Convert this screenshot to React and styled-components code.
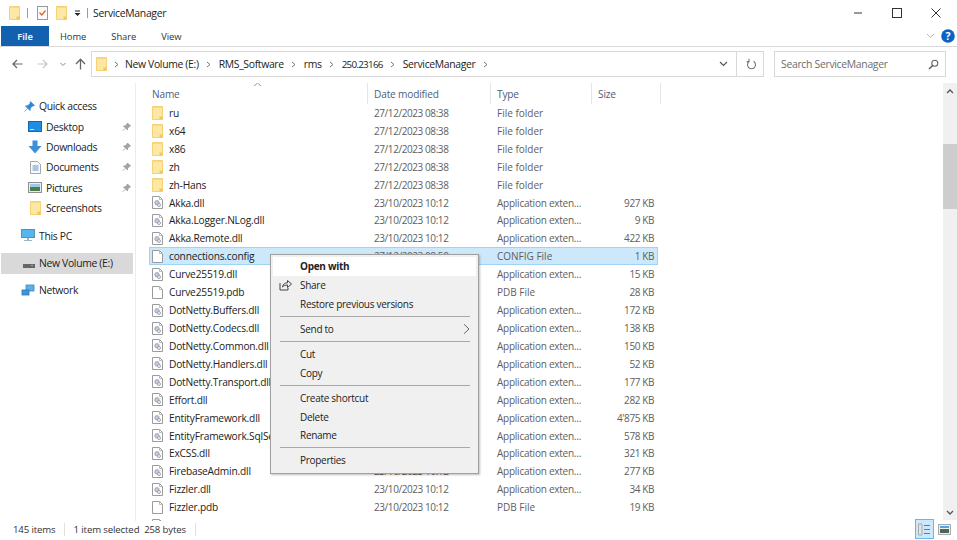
import React from "react";
import styled, { createGlobalStyle } from "styled-components";

const Global = createGlobalStyle`
  html, body { margin: 0; padding: 0; background: #fff; }
  body { font-family: "Open Sans", "Noto Sans", sans-serif; font-size: 10.4px; color: #1f1f1f; }
`;

const Win = styled.div`
  width: 957px; height: 540px; display: flex; flex-direction: column; overflow: hidden; position: relative; background: #fff;
`;
const TitleBar = styled.div`
  height: 26px; display: flex; align-items: center; padding-left: 9px; flex: none;
`;
const QuickSep = styled.span`
  width: 1px; height: 10px; background: #9a9a9a; margin: 0 ${p => p.$m}px;
`;
const QuickGap = styled.span`
  width: ${p => p.$w}px; flex: none;
`;
const TitleText = styled.span`
  font-size: 10.4px; letter-spacing: -0.3px; color: #222;
`;
const WinButtons = styled.div`
  margin-left: auto; display: flex; align-items: center; gap: 29px; padding-right: 16px;
`;
const Tabs = styled.div`
  height: 20px; flex: none; display: flex; align-items: stretch; border-bottom: 1px solid #dadada; box-sizing: content-box;
`;
const FileTab = styled.div`
  width: 48px; margin-left: 1px; background: #1261ae; color: #fff; display: flex; align-items: center; justify-content: center; font-size: 9.4px; font-weight: 600;
`;
const Tab = styled.div`
  display: flex; align-items: center; font-size: 9.4px; letter-spacing: -0.05px; color: #333; margin-left: ${p => p.$ml}px;
`;
const TabRight = styled.div`
  margin-left: auto; display: flex; align-items: center; gap: 6px; padding-right: 2px;
`;
const NavRow = styled.div`
  height: 36px; flex: none; display: flex; align-items: flex-start; padding-top: 4px; box-sizing: border-box;
`;
const NavIcons = styled.div`
  width: 91px; height: 26px; flex: none; display: flex; align-items: center; padding-left: 12px; box-sizing: border-box;
`;
const NavBtn = styled.span`
  display: inline-flex; margin-left: ${p => p.$ml || 0}px;
`;
const AddressBox = styled.div`
  width: 673px; height: 26px; box-sizing: border-box; border: 1px solid #d9d9d9; display: flex; align-items: center; flex: none;
`;
const Crumbs = styled.div`
  display: flex; align-items: center; flex: 1; padding-left: 4px; font-size: 10.4px; letter-spacing: -0.33px; color: #222;
`;
const CrumbDigits = styled.span`
  font-size: 9.8px; letter-spacing: -0.7px;
`;
const CrumbArrow = styled.span`
  display: inline-flex; margin: 0 ${p => p.$r || 8}px 0 7px;
`;
const AddressEnd = styled.div`
  width: 26px; height: 100%; border-left: 1px solid #d9d9d9; display: flex; align-items: center; justify-content: center;
`;
const SearchBox = styled.div`
  width: 172px; height: 26px; margin-left: 10px; box-sizing: border-box; border: 1px solid #d9d9d9; display: flex; align-items: center; justify-content: space-between; padding: 0 6px; color: #6d6d6d; font-size: 10.4px; letter-spacing: -0.3px; flex: none;
`;
const Main = styled.div`
  height: 438px; flex: none; display: flex; overflow: hidden;
`;
const Sidebar = styled.div`
  width: 136px; flex: none; box-sizing: border-box; border-right: 1px solid #ececec; padding-top: 12.5px; display: flex; flex-direction: column;
`;
const NavItem = styled.div`
  height: ${p => p.$h || 20.4}px; display: flex; align-items: center; position: relative; box-sizing: border-box; flex: none;
  margin-top: ${p => p.$mt || 0}px;
  padding-left: ${p => p.$pl}px; margin-left: ${p => p.$sel ? 1 : 0}px; margin-right: ${p => p.$sel ? 2 : 0}px;
  background: ${p => p.$sel ? "#d9d9d9" : "transparent"}; color: #222; gap: ${p => p.$gap || 5}px; font-size: 10.4px; letter-spacing: -0.33px;
`;
const Pin = styled.span`
  position: absolute; left: 122px; top: 50%; transform: translateY(-50%); display: inline-flex;
`;
const Content = styled.div`
  flex: 1; display: flex; flex-direction: column; position: relative; min-width: 0;
`;
const SortCaret = styled.span`
  position: absolute; left: 117px; top: -1px; display: inline-flex;
`;
const HeaderRow = styled.div`
  height: 21px; flex: none; display: grid; grid-template-columns: 232px 123px 101px 69px; color: #4c607a; font-size: 10.1px; letter-spacing: -0.15px; align-items: center;
`;
const HeaderCell = styled.div`
  height: 21px; display: flex; align-items: center; padding-left: ${p => p.$pl || 6}px; box-sizing: border-box; border-right: 1px solid #e5e5e5;
`;
const List = styled.div`
  flex: 1; overflow: hidden; padding-left: 13px;
`;
const Row = styled.div`
  height: 17.93px; display: grid; grid-template-columns: 219px 123px 101px 62px; align-items: center; box-sizing: border-box; width: 509px;
  background: ${p => p.$sel ? "#cde8fa" : "transparent"};
  box-shadow: ${p => p.$sel ? "inset 0 0 0 1px #9fd3f5" : "none"};
`;
const NameCell = styled.div`
  display: flex; align-items: center; gap: 6px; padding-left: 3px; color: #222; white-space: nowrap; overflow: hidden; font-size: 10.2px; letter-spacing: -0.2px;
`;
const DimCell = styled.div`
  color: #5e5e5e; padding-left: 6px; white-space: nowrap; overflow: hidden; font-size: 10px; letter-spacing: ${p => p.$ls || 0}px;
`;
const SizeCell = styled.div`
  color: #5e5e5e; text-align: right; font-size: 10px; letter-spacing: -0.4px;
`;
const Scrollbar = styled.div`
  position: absolute; top: 0; right: 0; bottom: 1px; width: 14px; background: #f0f0f0; display: flex; flex-direction: column; align-items: center; justify-content: space-between;
`;
const ScrollBtn = styled.div`
  height: 16px; display: flex; align-items: center; justify-content: center;
`;
const Thumb = styled.div`
  position: absolute; left: 0; right: 0; top: 61px; height: 65px; background: #cdcdcd;
`;
const Status = styled.div`
  height: 19px; flex: none; box-sizing: border-box; display: flex; align-items: center; font-size: 9.6px; letter-spacing: -0.12px; color: #333; padding: 0 0 3px 13px; position: relative;
`;
const StatusSep = styled.span`
  width: 1px; height: 13px; background: #e0e0e0; margin: ${p => p.$m};
`;
const ViewButtons = styled.div`
  margin-left: auto; align-self: flex-start; margin-top: -2px; display: flex; align-items: center; gap: 3px; padding-right: 6px;
`;
const ViewBtn = styled.div`
  width: ${p => p.$on ? 19 : 14}px; height: 20px; box-sizing: border-box; display: flex; align-items: center; justify-content: center;
  background: ${p => p.$on ? "#cce8ff" : "transparent"}; border: ${p => p.$on ? "1px solid #63b9ea" : "none"};
`;
const Menu = styled.div`
  position: absolute; left: 270px; top: 254px; width: 209px; height: 220px; box-sizing: border-box; background: #f0f0f0; border: 1px solid #a0a0a0; box-shadow: 1px 1px 2px rgba(0,0,0,.25); padding: 2px; display: flex; flex-direction: column; font-size: 10px; letter-spacing: -0.28px; color: #222;
`;
const MenuItem = styled.div`
  height: 18.8px; flex: none; display: flex; align-items: center; padding-left: 27px; position: relative;
  font-weight: ${p => p.$bold ? 700 : 400}; background: ${p => p.$hot ? "#fff" : "transparent"};
`;
const MenuIcon = styled.span`
  position: absolute; left: 6px; top: 50%; transform: translateY(-50%); display: inline-flex;
`;
const MenuArrow = styled.span`
  position: absolute; right: 6px; top: 50%; transform: translateY(-50%); display: inline-flex;
`;
const MenuSep = styled.div`
  height: 1px; background: #a8a8a8; margin: 2.6px 6px 2.6px 7px; flex: none;
`;

const Folder = ({ w = 11, h = 14 }) => (
  <svg width={w} height={h} viewBox="0 0 11 14" preserveAspectRatio="none" style={{ flex: "none" }}>
    <path d="M0.5 0.5H10.5V13.5H0.5Z" fill="#fde7a5" stroke="#f6d274" />
    <path d="M1 1H10V2H1Z" fill="#f8d987" />
    <path d="M7.5 10.5V13.5H10.5V10.5Z" fill="#f0c65d" />
  </svg>
);
const FileIcon = ({ dll }) => (
  <svg width="11" height="13" viewBox="0 0 11 13" style={{ flex: "none" }}>
    <path d="M0.5 0.5H7.5L10.5 3.5V12.5H0.5Z" fill="#fff" stroke="#9b9b9b" />
    <path d="M7.5 0.5V3.5H10.5" fill="none" stroke="#bbb" />
    {dll && <circle cx="5" cy="6.8" r="2.2" fill="#c4ccd8" stroke="#8e97a5" strokeWidth=".8" />}
    {dll && <circle cx="7" cy="9" r="1.6" fill="#dfe4ea" stroke="#8e97a5" strokeWidth=".7" />}
  </svg>
);
const Chevron = ({ c = "#777" }) => (
  <svg width="5" height="7" viewBox="0 0 5 7"><path d="M1 1L4 3.5L1 6" fill="none" stroke={c} strokeWidth="1" /></svg>
);
const PinIcon = () => (
  <svg width="9" height="9" viewBox="0 0 9 9"><path d="M5.5 .5L8.5 3.5L7.3 4L5.6 5.8L5.5 7.5L1.5 3.5L3.2 3.4L5 1.7ZM3.2 5.8L.7 8.3" fill="#a5a5a5" stroke="#8f8f8f" strokeWidth=".7" /></svg>
);

const folders = ["ru", "x64", "x86", "zh", "zh-Hans"];
const D1 = "23/10/2023 10:12";
const AE = "Application exten...";
const files = [
  ["Akka.dll", D1, AE, "927 KB", 1],
  ["Akka.Logger.NLog.dll", D1, AE, "9 KB", 1],
  ["Akka.Remote.dll", D1, AE, "422 KB", 1],
  ["connections.config", "27/12/2023 08:50", "CONFIG File", "1 KB", 0],
  ["Curve25519.dll", D1, AE, "15 KB", 1],
  ["Curve25519.pdb", D1, "PDB File", "28 KB", 0],
  ["DotNetty.Buffers.dll", D1, AE, "172 KB", 1],
  ["DotNetty.Codecs.dll", D1, AE, "138 KB", 1],
  ["DotNetty.Common.dll", D1, AE, "150 KB", 1],
  ["DotNetty.Handlers.dll", D1, AE, "52 KB", 1],
  ["DotNetty.Transport.dll", D1, AE, "177 KB", 1],
  ["Effort.dll", D1, AE, "282 KB", 1],
  ["EntityFramework.dll", D1, AE, "4'875 KB", 1],
  ["EntityFramework.SqlServer.dll", D1, AE, "578 KB", 1],
  ["ExCSS.dll", D1, AE, "321 KB", 1],
  ["FirebaseAdmin.dll", D1, AE, "277 KB", 1],
  ["Fizzler.dll", D1, AE, "34 KB", 1],
  ["Fizzler.pdb", D1, "PDB File", "19 KB", 0],
];

export default function App() {
  return (
    <Win>
      <Global />
      <TitleBar>
        <Folder w={11} h={14} />
        <QuickSep $m={7} />
        <QuickGap $w={2} />
        <svg width="11" height="14" viewBox="0 0 11 14">
          <rect x=".5" y=".5" width="10" height="13" fill="#fbfbfb" stroke="#9a9a9a" />
          <path d="M2.5 6.5L4.8 9L8.5 4.5" fill="none" stroke="#d9602c" strokeWidth="1.2" />
        </svg>
        <QuickGap $w={8} />
        <Folder w={11} h={14} />
        <QuickGap $w={7} />
        <svg width="7" height="7" viewBox="0 0 7 7"><path d="M1 1H6" stroke="#222" /><path d="M.5 3H6.5L3.5 6Z" fill="#222" /></svg>
        <QuickSep $m={5.5} />
        <TitleText>ServiceManager</TitleText>
        <WinButtons>
          <svg width="10" height="10" viewBox="0 0 10 10"><path d="M1 5H9" stroke="#333" /></svg>
          <svg width="10" height="10" viewBox="0 0 10 10"><rect x=".5" y=".5" width="9" height="9" fill="none" stroke="#333" /></svg>
          <svg width="10" height="10" viewBox="0 0 10 10"><path d="M.5 .5L9.5 9.5M9.5 .5L.5 9.5" stroke="#333" /></svg>
        </WinButtons>
      </TitleBar>
      <Tabs>
        <FileTab>File</FileTab>
        <Tab $ml={11}>Home</Tab>
        <Tab $ml={25}>Share</Tab>
        <Tab $ml={25}>View</Tab>
        <TabRight>
          <svg width="9" height="6" viewBox="0 0 9 6"><path d="M1 1L4.5 4.5L8 1" fill="none" stroke="#b5b5b5" /></svg>
          <svg width="14" height="14" viewBox="0 0 14 14">
            <circle cx="7" cy="7" r="6.8" fill="#0a63c4" />
            <text x="7" y="10.6" textAnchor="middle" fontSize="10.5" fontWeight="700" fill="#fff" fontFamily="Open Sans">?</text>
          </svg>
        </TabRight>
      </Tabs>
      <NavRow>
        <NavIcons>
          <NavBtn><svg width="11" height="10" viewBox="0 0 11 10"><path d="M10.5 5H1.5M5 1L1 5L5 9" fill="none" stroke="#666" strokeWidth="1.2" /></svg></NavBtn>
          <NavBtn $ml={14}><svg width="11" height="10" viewBox="0 0 11 10"><path d="M.5 5H9.5M6 1L10 5L6 9" fill="none" stroke="#c8c8c8" strokeWidth="1.2" /></svg></NavBtn>
          <NavBtn $ml={12}><svg width="6" height="5" viewBox="0 0 6 5"><path d="M.5 1L3 3.5L5.5 1" fill="none" stroke="#888" strokeWidth="1" /></svg></NavBtn>
          <NavBtn $ml={9}><svg width="11" height="12" viewBox="0 0 11 12"><path d="M5.5 11.5V1.5M1 6L5.5 1.2L10 6" fill="none" stroke="#666" strokeWidth="1.3" /></svg></NavBtn>
        </NavIcons>
        <AddressBox>
          <Crumbs>
            <Folder w={11} h={14} />
            <CrumbArrow $r={6}><Chevron /></CrumbArrow>New Volume (E:)
            <CrumbArrow><Chevron /></CrumbArrow>RMS_Software
            <CrumbArrow><Chevron /></CrumbArrow>rms
            <CrumbArrow><Chevron /></CrumbArrow><CrumbDigits>250.23166</CrumbDigits>
            <CrumbArrow><Chevron /></CrumbArrow>ServiceManager
            <CrumbArrow><Chevron /></CrumbArrow>
          </Crumbs>
          <svg width="9" height="6" viewBox="0 0 9 6" style={{ marginRight: 8 }}><path d="M1 1L4.5 4.5L8 1" fill="none" stroke="#555" strokeWidth="1.2" /></svg>
          <AddressEnd>
            <svg width="11" height="12" viewBox="0 0 11 12"><path d="M7.5 3.3A4 4 0 1 1 3.5 3.3M3 .8V3.6H.6" transform="translate(1 0)" fill="none" stroke="#777" strokeWidth="1.1" /></svg>
          </AddressEnd>
        </AddressBox>
        <SearchBox>
          <span>Search ServiceManager</span>
          <svg width="11" height="11" viewBox="0 0 11 11"><circle cx="6.8" cy="4.2" r="3" fill="none" stroke="#666" strokeWidth="1.1" /><path d="M4.7 6.4L1 10" stroke="#555" strokeWidth="1.4" /></svg>
        </SearchBox>
      </NavRow>
      <Main>
        <Sidebar>
          <NavItem $pl={24} $gap={4} $h={21}>
            <svg width="11" height="11" viewBox="0 0 11 11"><path d="M6.5 .5L10.5 4.5L8.5 5L6.5 7L6 9.5L1.5 5L4 4.5L6 2.5ZM3.5 7.5L.5 10.5" fill="#2e86d6" stroke="#2e86d6" strokeWidth=".7" /></svg>
            Quick access
          </NavItem>
          <NavItem $pl={28} $gap={4}>
            <svg width="14" height="11" viewBox="0 0 14 11"><rect x=".5" y=".5" width="13" height="10" fill="#1f8ee0" stroke="#1169b4" /><rect x="2" y="8" width="4" height="1" fill="#bfe3fb" /></svg>
            Desktop
            <Pin><PinIcon /></Pin>
          </NavItem>
          <NavItem $pl={28} $gap={4}>
            <svg width="14" height="14" viewBox="0 0 14 14"><path d="M4.5 .5H9.5V6H13.5L7 13.5L.5 6H4.5Z" fill="#3c8fdd" /></svg>
            Downloads
            <Pin><PinIcon /></Pin>
          </NavItem>
          <NavItem $pl={30} $gap={5}>
            <svg width="11" height="13" viewBox="0 0 11 13"><path d="M.5 .5H7.5L10.5 3.5V12.5H.5Z" fill="#fbfbfb" stroke="#a7a7a7" /><path d="M2.5 5H8.5M2.5 7H8.5M2.5 9H8.5" stroke="#5a94c9" /></svg>
            Documents
            <Pin><PinIcon /></Pin>
          </NavItem>
          <NavItem $pl={28} $gap={4}>
            <svg width="14" height="11" viewBox="0 0 14 11"><rect x=".5" y=".5" width="13" height="10" fill="#e8edf2" stroke="#8f8f8f" /><rect x="2" y="2" width="10" height="3" fill="#9cc8ea" /><rect x="2" y="5" width="10" height="4" fill="#4e7b4e" /></svg>
            Pictures
            <Pin><PinIcon /></Pin>
          </NavItem>
          <NavItem $pl={30} $gap={5}>
            <Folder w={11} h={14} />
            Screenshots
          </NavItem>
          <NavItem $pl={21} $gap={4} $mt={7}>
            <svg width="14" height="13" viewBox="0 0 14 13"><rect x=".5" y=".5" width="13" height="8" fill="#55b5ee" stroke="#5b8fb5" /><path d="M6 9H8V11H11V12H3V11H6Z" fill="#9fb4c4" /></svg>
            This PC
          </NavItem>
          <NavItem $pl={22} $gap={4} $sel $mt={7} $h={21}>
            <svg width="12" height="6" viewBox="0 0 12 6" style={{ marginTop: 5 }}><rect y="1" width="12" height="4" fill="#666" /><rect x="8" y="2" width="2" height="1" fill="#7ad65c" /></svg>
            New Volume (E:)
          </NavItem>
          <NavItem $pl={21} $gap={4} $mt={6}>
            <svg width="14" height="13" viewBox="0 0 14 13"><rect x="5" y="1" width="8" height="6" fill="#5bb2ea" stroke="#3f86bb" strokeWidth=".8" /><rect x="1" y="6" width="7" height="5" fill="#3d96db" stroke="#2f77ae" strokeWidth=".8" /></svg>
            Network
          </NavItem>
        </Sidebar>
        <Content>
          <SortCaret>
            <svg width="9" height="5" viewBox="0 0 9 5"><path d="M1 4L4.5 1L8 4" fill="none" stroke="#999" /></svg>
          </SortCaret>
          <HeaderRow>
            <HeaderCell $pl={16}>Name</HeaderCell>
            <HeaderCell>Date modified</HeaderCell>
            <HeaderCell>Type</HeaderCell>
            <HeaderCell>Size</HeaderCell>
          </HeaderRow>
          <List>
            {folders.map(n => (
              <Row key={n}>
                <NameCell><Folder w={11} h={14} />{n}</NameCell>
                <DimCell $ls={-0.42}>27/12/2023 08:38</DimCell>
                <DimCell>File folder</DimCell>
                <SizeCell />
              </Row>
            ))}
            {files.map(([n, d, t, s, dll], i) => (
              <Row key={n} $sel={i === 3}>
                <NameCell><FileIcon dll={dll} />{n}</NameCell>
                <DimCell $ls={-0.42}>{d}</DimCell>
                <DimCell $ls={t === AE ? -0.24 : 0}>{t}</DimCell>
                <SizeCell>{s}</SizeCell>
              </Row>
            ))}
            <Row><NameCell><FileIcon /></NameCell></Row>
          </List>
          <Scrollbar>
            <ScrollBtn><svg width="8" height="5" viewBox="0 0 8 5"><path d="M1 4L4 1L7 4" fill="none" stroke="#555" strokeWidth="1.3" /></svg></ScrollBtn>
            <ScrollBtn><svg width="8" height="5" viewBox="0 0 8 5"><path d="M1 1L4 4L7 1" fill="none" stroke="#555" strokeWidth="1.3" /></svg></ScrollBtn>
            <Thumb />
          </Scrollbar>
        </Content>
      </Main>
      <Status>
        145 items<StatusSep $m="0 9px 0 8px" />1 item selected&nbsp;&nbsp;258 bytes<StatusSep $m="0 0 0 9px" />
        <ViewButtons>
          <ViewBtn $on>
            <svg width="13" height="13" viewBox="0 0 13 13"><path d="M.5 1H4V12H.5Z" fill="#e4e4e4" stroke="#aaa" /><path d="M6 2.5H12M6 6.5H12M6 10.5H12" stroke="#777" /></svg>
          </ViewBtn>
          <ViewBtn>
            <svg width="13" height="11" viewBox="0 0 13 11"><rect x=".5" y=".5" width="12" height="10" fill="#efefef" stroke="#aaa" /><rect x="2" y="2" width="9" height="2" fill="#4fa6e6" /><rect x="2" y="5" width="9" height="4" fill="#47695c" /></svg>
          </ViewBtn>
        </ViewButtons>
      </Status>
      <Menu>
        <MenuItem $bold $hot>Open with</MenuItem>
        <MenuItem>
          <MenuIcon><svg width="13" height="12" viewBox="0 0 13 12"><path d="M1 4V11H9V9M3.5 8C4 5 6 3.8 8.5 3.8V1.5L12.5 5L8.5 8.5V6C6.5 6 5 6.5 3.5 8Z" fill="none" stroke="#444" /></svg></MenuIcon>
          Share
        </MenuItem>
        <MenuItem>Restore previous versions</MenuItem>
        <MenuSep />
        <MenuItem>Send to<MenuArrow><svg width="7" height="11" viewBox="0 0 7 11"><path d="M1 .8L6 5.5L1 10.2" fill="none" stroke="#666" /></svg></MenuArrow></MenuItem>
        <MenuSep />
        <MenuItem>Cut</MenuItem>
        <MenuItem>Copy</MenuItem>
        <MenuSep />
        <MenuItem>Create shortcut</MenuItem>
        <MenuItem>Delete</MenuItem>
        <MenuItem>Rename</MenuItem>
        <MenuSep />
        <MenuItem>Properties</MenuItem>
      </Menu>
    </Win>
  );
}
